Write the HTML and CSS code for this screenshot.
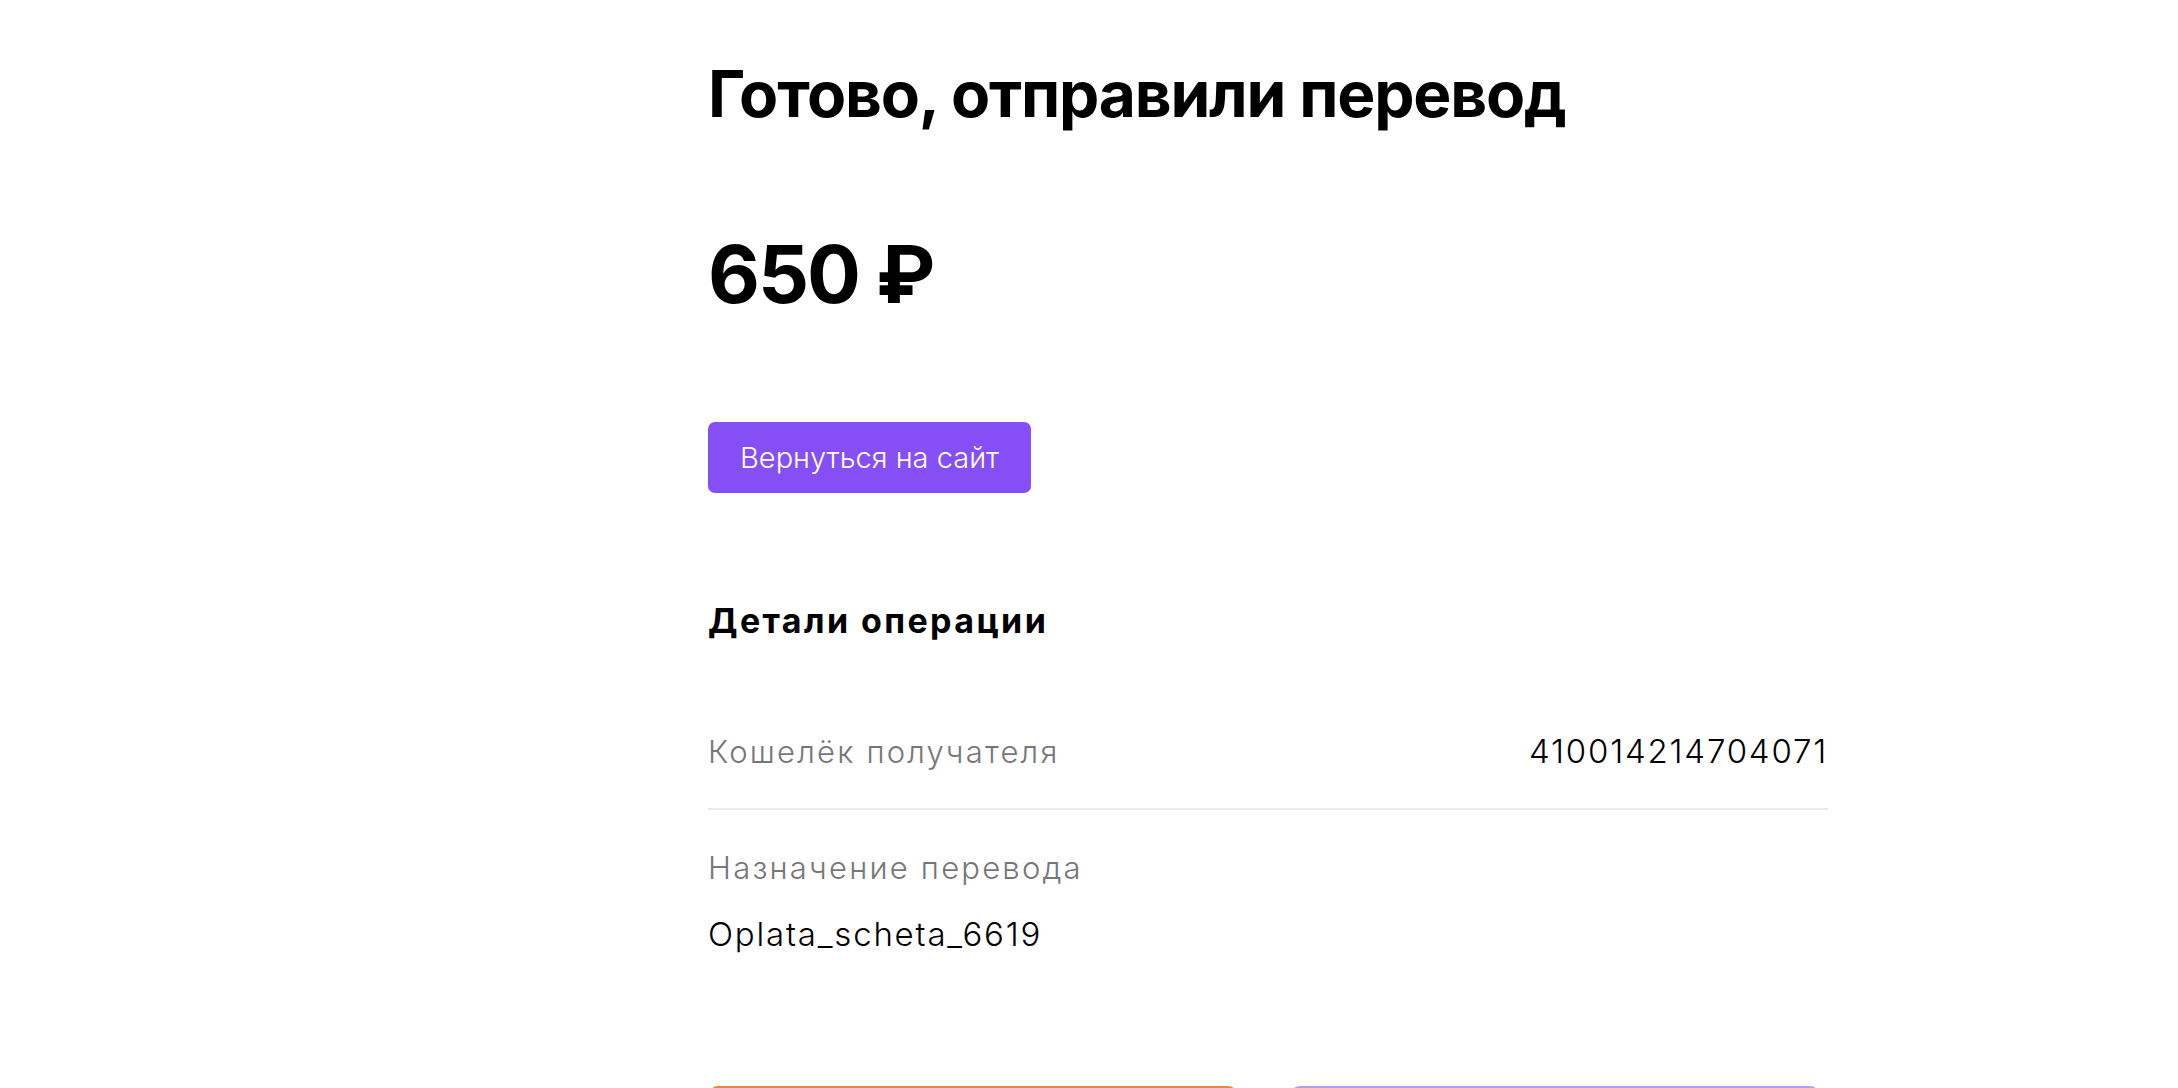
FILE: index.html
```html
<!DOCTYPE html>
<html lang="ru">

<head>
    <meta charset="UTF-8">
    <title>Перевод отправлен</title>
    <link rel="stylesheet" href="styles.css">
</head>

<body>
    <section id="content">
        <h1 class="title">Готово, отправили перевод</h1>
        <div class="amount">650 ₽</div>
        <a class="backButton" href="#">Вернуться на сайт</a>

        <h2 class="detailsTitle">Детали операции</h2>
        <div class="detailsRow rowInline">
            <span class="rowLabel">Кошелёк получателя</span>
            <span class="rowValue">410014214704071</span>
        </div>
        <div class="detailsRow">
            <div class="rowLabel">Назначение перевода</div>
            <div class="rowValue purpose">Oplata_scheta_6619</div>
        </div>

        <div class="actions">
            <div class="actionButton orange"></div>
            <div class="actionButton lavender"></div>
        </div>
    </section>
</body>

</html>
```

FILE: styles.css
```css
body {
    margin: 0;
    padding: 0;
    font-family: 'Inter', 'Noto Sans', sans-serif;
    color: #000;
    background: #fff;
}

#content {
    width: 1120px;
    margin-left: 708px;
    padding-top: 54px;
    display: flex;
    flex-direction: column;
    align-items: flex-start;
}

.title {
    margin: 0;
    font-size: 64px;
    line-height: 80px;
    font-weight: 700;
    letter-spacing: -1.2px;
}

.amount {
    margin-top: 92px;
    font-size: 80px;
    line-height: 96px;
    font-weight: 700;
    letter-spacing: -2px;
}

.backButton {
    margin-top: 100px;
    height: 71px;
    padding: 0 32px;
    display: inline-flex;
    align-items: center;
    background-color: #854ff5;
    border-radius: 7px;
    color: #fff;
    font-size: 29px;
    font-weight: 300;
    text-decoration: none;
}

.detailsTitle {
    margin: 108px 0 0 0;
    font-size: 34px;
    line-height: 40px;
    font-weight: 700;
    letter-spacing: 2.4px;
}

.detailsRow {
    width: 100%;
    font-size: 31px;
    line-height: 40px;
}

.rowInline {
    margin-top: 90px;
    padding-bottom: 36px;
    display: flex;
    justify-content: space-between;
    align-items: baseline;
    border-bottom: 2px solid #ebebeb;
}

.detailsRow + .detailsRow {
    margin-top: 38px;
}

.rowLabel {
    color: #777;
    font-weight: 300;
    letter-spacing: 2.2px;
}

.rowValue {
    font-size: 33px;
    font-weight: 300;
    letter-spacing: 1.8px;
}

.purpose {
    margin-top: 26px;
}

.actions {
    margin-top: 132px;
    width: 1112px;
    display: flex;
    justify-content: space-between;
}

.actionButton {
    width: 530px;
    height: 72px;
    border-radius: 10px;
}

.orange {
    background-color: #ef8532;
}

.lavender {
    background-color: #b39ef0;
}
```
